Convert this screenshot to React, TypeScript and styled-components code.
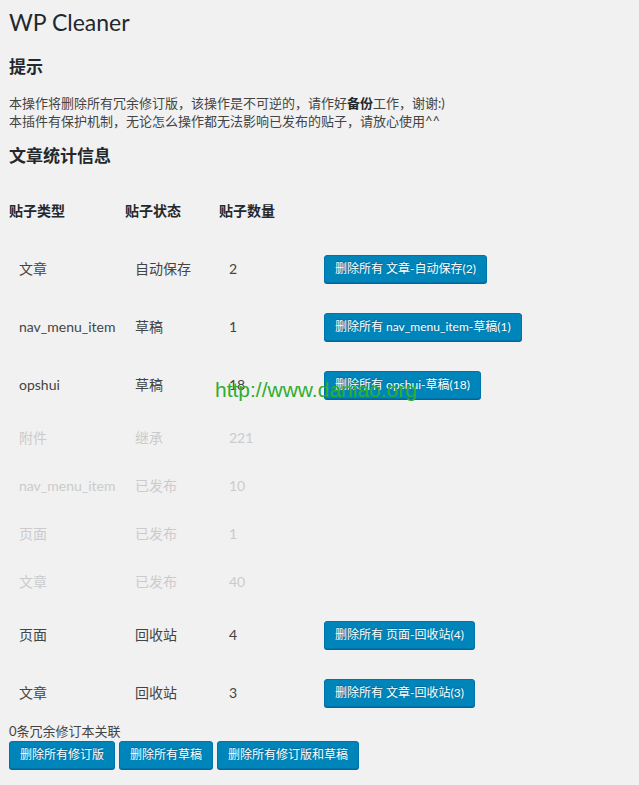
import React from 'react'
import styled, { createGlobalStyle } from 'styled-components'

const fontStack = `Lato, "Open Sans", "Noto Sans CJK SC", sans-serif`

const GlobalStyle = createGlobalStyle`
  html, body {
    margin: 0;
    padding: 0;
    background: #f1f1f1;
  }
  body {
    font-family: ${fontStack};
    font-size: 13px;
    color: #444;
  }
`

const Wrap = styled.div`
  position: relative;
  padding: 0 9px 16px;
`

const Title = styled.h1`
  margin: 0;
  padding: 8px 0 0;
  font-size: 23px;
  line-height: 29px;
  font-weight: 400;
  color: #23282d;
`

const SectionTitle = styled.h2<{ top: number }>`
  margin: ${({ top }) => top}px 0 0;
  font-size: 17px;
  line-height: 22px;
  font-weight: 600;
  color: #23282d;
`

const Notice = styled.p`
  margin: 16px 0 0;
  font-size: 13px;
  line-height: 18px;
  color: #444;

  strong {
    font-weight: 700;
    color: #23282d;
  }
`

const StatTable = styled.div`
  margin-top: 15px;
`

const StatRow = styled.div<{ muted?: boolean }>`
  display: grid;
  grid-template-columns: 116px 94px 95px auto;
  align-items: center;
  color: ${({ muted }) => (muted ? '#cbcbcb' : '#444')};
`

const HeadCell = styled.div`
  padding: 20px 10px 20px 0;
  font-size: 14px;
  line-height: 18px;
  font-weight: 700;
  color: #23282d;
`

const Cell = styled.div`
  padding: 15px 10px;
  font-size: 14px;
  line-height: 18px;
  white-space: nowrap;
`

const Button = styled.button`
  display: inline-block;
  height: 28px;
  margin: 0;
  padding: 0 10px;
  font-family: ${fontStack};
  font-size: 12px;
  line-height: 26px;
  color: #fff;
  white-space: nowrap;
  background: #0085ba;
  border: 1px solid #0073aa;
  border-radius: 3px;
  box-shadow: 0 1px 0 #006799;
  text-shadow: 0 -1px 1px #006799;
  cursor: pointer;
`

const Footnote = styled.div`
  font-size: 13px;
  line-height: 18px;
  color: #444;
`

const ActionBar = styled.div`
  display: flex;
  gap: 4px;
  margin-top: 1px;
`

const Watermark = styled.div`
  position: absolute;
  left: 215px;
  top: 378px;
  font-family: "Liberation Sans", Arial, sans-serif;
  font-size: 21px;
  line-height: 24px;
  color: #2fae2f;
  pointer-events: none;
  z-index: 2;
`

type Stat = { type: string; status: string; count: number; removable: boolean }

const stats: Stat[] = [
  { type: '文章', status: '自动保存', count: 2, removable: true },
  { type: 'nav_menu_item', status: '草稿', count: 1, removable: true },
  { type: 'opshui', status: '草稿', count: 18, removable: true },
  { type: '附件', status: '继承', count: 221, removable: false },
  { type: 'nav_menu_item', status: '已发布', count: 10, removable: false },
  { type: '页面', status: '已发布', count: 1, removable: false },
  { type: '文章', status: '已发布', count: 40, removable: false },
  { type: '页面', status: '回收站', count: 4, removable: true },
  { type: '文章', status: '回收站', count: 3, removable: true },
]

export default function App() {
  return (
    <Wrap>
      <GlobalStyle />
      <Title>WP Cleaner</Title>
      <SectionTitle top={19}>提示</SectionTitle>
      <Notice>
        本操作将删除所有冗余修订版，该操作是不可逆的，请作好<strong>备份</strong>工作，谢谢:)
        <br />
        本插件有保护机制，无论怎么操作都无法影响已发布的贴子，请放心使用^^
      </Notice>
      <SectionTitle top={15}>文章统计信息</SectionTitle>

      <StatTable>
        <StatRow>
          <HeadCell>贴子类型</HeadCell>
          <HeadCell>贴子状态</HeadCell>
          <HeadCell>贴子数量</HeadCell>
          <HeadCell />
        </StatRow>
        {stats.map((s, i) => (
          <StatRow key={i} muted={!s.removable}>
            <Cell>{s.type}</Cell>
            <Cell>{s.status}</Cell>
            <Cell>{s.count}</Cell>
            <Cell>
              {s.removable && (
                <Button>
                  删除所有 {s.type}-{s.status}({s.count})
                </Button>
              )}
            </Cell>
          </StatRow>
        ))}
      </StatTable>

      <Footnote>0条冗余修订本关联</Footnote>
      <ActionBar>
        <Button>删除所有修订版</Button>
        <Button>删除所有草稿</Button>
        <Button>删除所有修订版和草稿</Button>
      </ActionBar>

      <Watermark>http://www.daniao.org</Watermark>
    </Wrap>
  )
}
